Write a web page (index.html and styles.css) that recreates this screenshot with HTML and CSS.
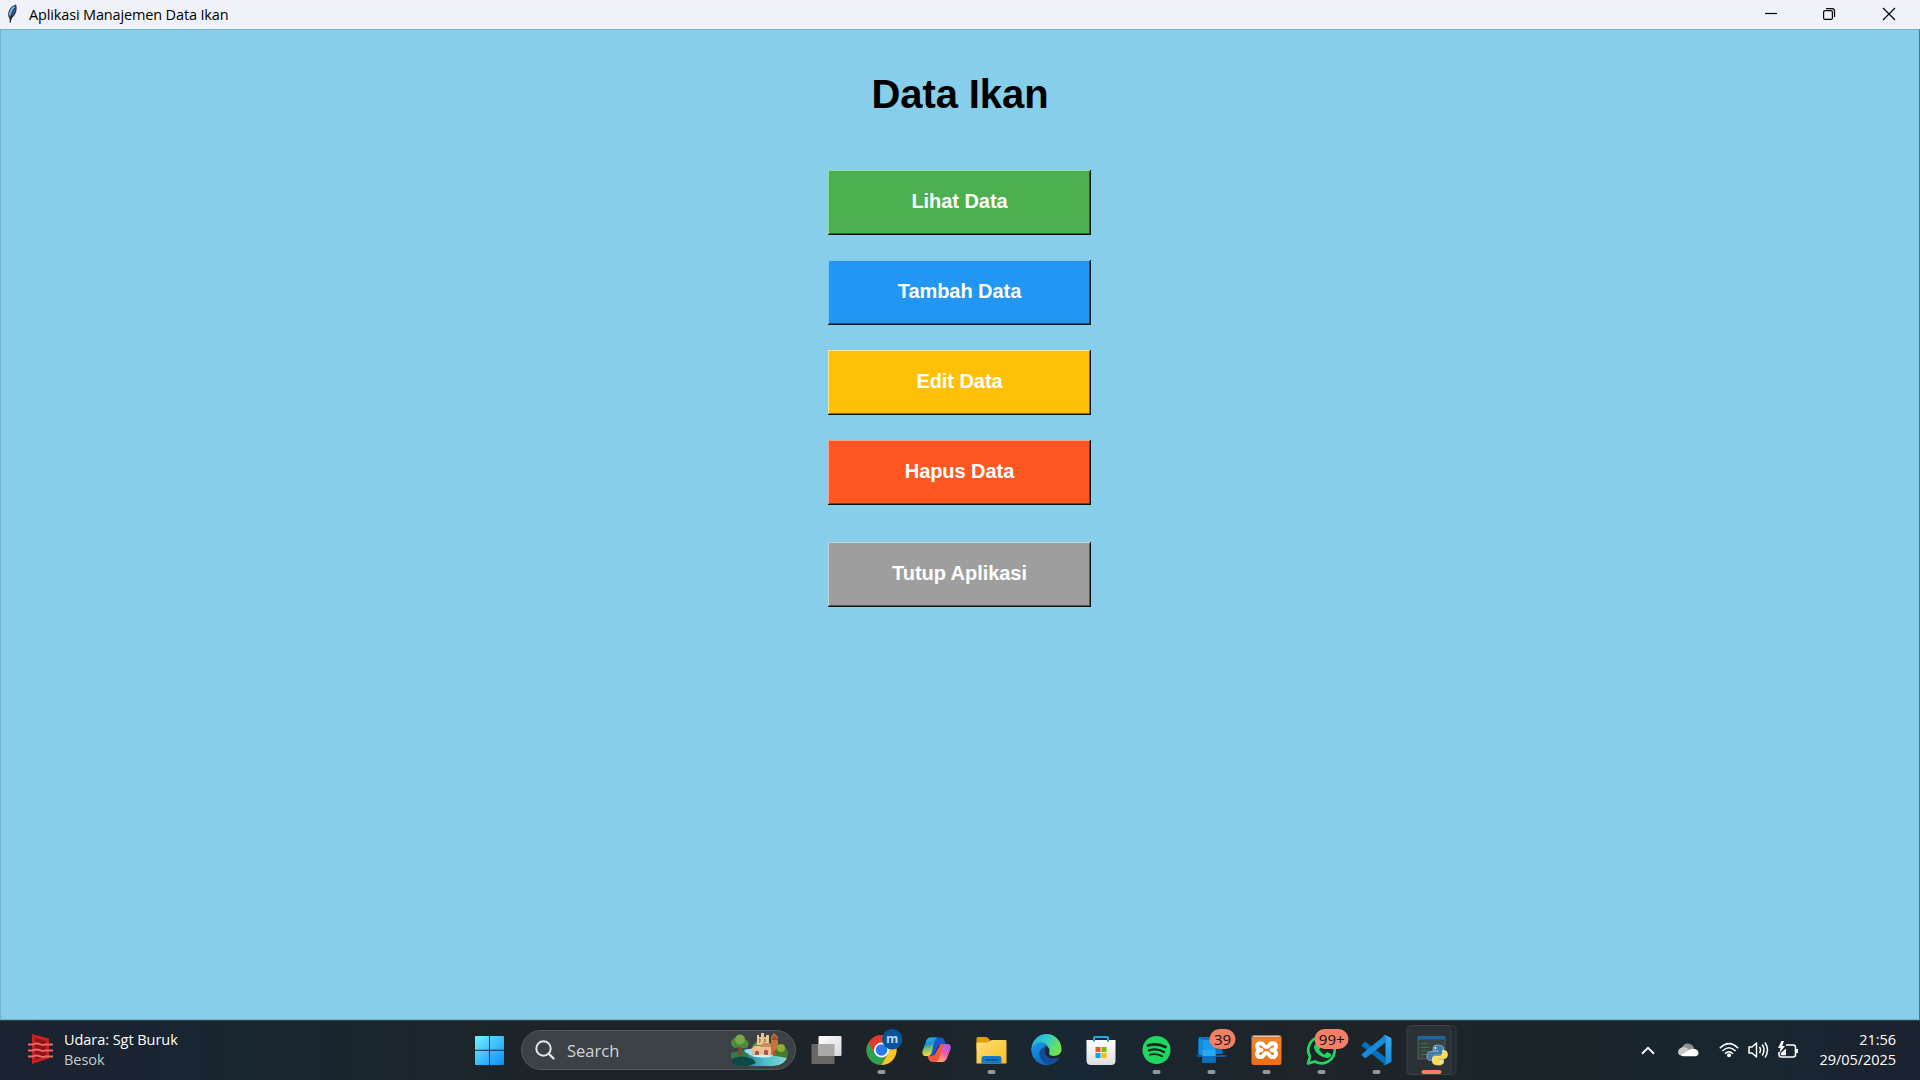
FILE: index.html
```
<!DOCTYPE html>
<html lang="id">
<head>
<meta charset="utf-8">
<title>Aplikasi Manajemen Data Ikan</title>
<link rel="stylesheet" href="styles.css">
</head>
<body>
<header class="titlebar">
  <svg class="feather" width="12" height="20" viewBox="0 0 12 20"><path d="M3.500 15C0 9 4 2 10 .5c1.500 4 .5 10-4 13.500L4 19l-.5-4Z" fill="#333b48"/><path d="M3.500 12C2 8 5 3.500 9 2c.8 3.500-.5 7.500-3.500 10.500Z" fill="#3d76b5"/><path d="M4 11c0-4 2-6.500 4.500-8.500" stroke="#8bb9e8" stroke-width="1.500" fill="none"/><path d="M4 19 6 10l3-6" stroke="#10151d" stroke-width=".7" fill="none"/></svg>
  <span class="title">Aplikasi Manajemen Data Ikan</span>
  <div class="controls">
    <svg width="58" height="29" viewBox="0 0 58 29"><path d="M23 13.500h12" stroke="#000" stroke-width="1.200"/></svg>
    <svg width="59" height="29" viewBox="0 0 59 29"><g fill="none" stroke="#000" stroke-width="1.200"><rect x="23.600" y="10.600" width="8.800" height="8.800" rx="1.500"/><path d="M26 8.600h6a2.500 2.500 0 0 1 2.500 2.500v6"/></g></svg>
    <svg width="61" height="29" viewBox="0 0 61 29"><path d="m24 8 12 12M36 8 24 20" stroke="#000" stroke-width="1.200"/></svg>
  </div>
</header>

<main class="window">
  <h1 class="heading">Data Ikan</h1>
  <div class="menu">
    <button class="btn green">Lihat Data</button>
    <button class="btn blue">Tambah Data</button>
    <button class="btn amber">Edit Data</button>
    <button class="btn red">Hapus Data</button>
    <button class="btn gray">Tutup Aplikasi</button>
  </div>
</main>

<footer class="taskbar">
  <div class="weather">
    <svg width="26" height="30" viewBox="0 0 26 30"><path d="m4 0 17 4.500v20L4 30Z" fill="#c8201f"/><path d="m7 4 11 3v15.500L7 26Z" fill="#8d1416"/><g fill="none" stroke="#e8686c" stroke-width="2"><path d="M0 10.500h5c5-3 9 2 12 0h8M0 16.500h5c5-3 9 2 12 0h8M0 22.500h5c5-3 9 2 12 0h8"/></g></svg>
    <div class="lines"><span class="udara">Udara: Sgt Buruk</span><span class="dim">Besok</span></div>
  </div>

  <div class="apps">
    <svg class="app start" viewBox="-27.5 -30 55 60"><defs><linearGradient id="win" gradientUnits="userSpaceOnUse" x1="-14" y1="-14" x2="14" y2="15"><stop stop-color="#72efff"/><stop offset="1" stop-color="#0c8efb"/></linearGradient></defs><path fill="url(#win)" d="M-13.500-14H-.5V-.3h-14V-13a1 1 0 0 1 1-1ZM.5-14h13a1 1 0 0 1 1 1V-.3H.5ZM-14.500.7H-.5v14.300h-13a1 1 0 0 1-1-1ZM.5.7h14V14a1 1 0 0 1-1 1H.5Z"/></svg>
    <div class="search">
      <svg width="20" height="20" viewBox="0 0 20 20" fill="none" stroke="#e3e5e6" stroke-width="2"><circle cx="8.500" cy="8.500" r="7.200"/><path d="m13.500 13.500 5 5" stroke-linecap="round" stroke-width="2.400"/></svg>
      <span class="search-label">Search</span>
      <svg class="scene" width="57" height="34" viewBox="0 0 57 34">
        <defs><clipPath id="sc"><path d="M0 0h57v22q-3 11-15 11H9Q2 32 0 27Z"/></clipPath><linearGradient id="water" x2="1"><stop stop-color="#0c5a78"/><stop offset=".6" stop-color="#48bcc8"/><stop offset="1" stop-color="#8ad9dc"/></linearGradient></defs>
        <g clip-path="url(#sc)">
          <path d="M0 20q14-5 30-2t26 6v10H0Z" fill="url(#water)"/>
          <path d="M13 17q10-3 18 1l-9 5q-6-1-9-6Z" fill="#9ddce8"/>
          <path d="M0 20q9-3 18 1l-2 5-16 3Z" fill="#347b45"/>
          <path d="M0 26q10-5 22 0l3 4-10 4H0Z" fill="#0d4a45"/>
          <path d="M7.500 12h3l1 10H7Z" fill="#74502f"/>
          <g fill="#4c8b3a"><circle cx="5" cy="10" r="5"/><circle cx="13" cy="11" r="4.500"/></g><circle cx="9" cy="6.500" r="5" fill="#7aa845"/>
          <path d="M21 14q5-8 10-6t10 7v7H22Z" fill="#5a9a3e"/>
          <path d="M26 2h2v2h2V0h3v4h2V2h3v10H26Z" fill="#e7c795"/>
          <path d="M28 6h1v3h-1m5-3h1v3h-1" stroke="#8c6037" fill="none"/>
          <path d="M20 16l4-3h20v10H23Z" fill="#f1bd98"/>
          <path d="M29 14l3-4h7l3 4Z" fill="#d08a55"/>
          <path d="M40 4l3-4 4 4v18h-7Z" fill="#c8723c"/><path d="m40 7 3.500-5 4 5Z" fill="#a34c29"/>
          <path d="M24 23v-4q2-3 4 0v4m5 0v-5q2-3 4 0v5m5 0v-5q2-2 3 0v5" fill="#a3583d"/>
          <path d="M44 18q5-8 11-3 4 6 1 10l-11-2Z" fill="#477a2a"/><circle cx="50" cy="15" r="4" fill="#8fae35"/>
          <path d="M20 23q10-3 22 0-8 3-22 0Z" fill="#d7eef0"/>
        </g>
      </svg>
    </div>

    <svg class="app taskview" viewBox="-27.5 -30 55 60"><defs><linearGradient id="tv" x2="1" y2="1"><stop stop-color="#fff"/><stop offset="1" stop-color="#d8d8d8"/></linearGradient></defs><rect x="-15" y="-6" width="23" height="20" rx="1" fill="#696766"/><rect x="-8" y="-14" width="23" height="20" rx="1" fill="url(#tv)"/><path d="M-8-6H8V6H-7a1 1 0 0 1-1-1Z" fill="#aaa9a8"/></svg>

    <svg class="app" viewBox="-27.5 -30 55 60"><circle r="15" fill="#e33b2e"/><path d="M-13-7.500A15 15 0 0 0 0 15L6.500 3.750H-6.500Z" fill="#2ba24c"/><path d="M0 15A15 15 0 0 0 13-7.500H0L6.500 3.750Z" fill="#fcc726"/><circle r="7.500" fill="#fff"/><circle r="5.800" fill="#2979ee"/><circle cx="10.700" cy="-10.700" r="10.200" fill="#04559b"/><text class="avatar" x="10.700" y="-7" text-anchor="middle">m</text><rect class="dot" x="-4" y="20" width="8" height="4" rx="2"/></svg>

    <svg class="app" viewBox="-27.5 -30 55 60"><defs><linearGradient id="c1" x2=".2" y2="1"><stop stop-color="#20b7ef"/><stop offset=".4" stop-color="#2192cf"/><stop offset=".7" stop-color="#8cc75b"/><stop offset="1" stop-color="#ffd52a"/></linearGradient><linearGradient id="c2" x1=".8" x2=".3" y2="1"><stop stop-color="#a45cf2"/><stop offset=".5" stop-color="#ea5ba5"/><stop offset="1" stop-color="#ffac78"/></linearGradient></defs><path d="M-6-12.500H4q3 0 4 3l1 4H5q-3 0-4 3L-3 6h-7Z" fill="#1458d6"/><path d="M6 12H-4q-3 0-4-3l-1-3h4q3 0 4-3L4-6h6Z" fill="#f2583e"/><path d="M-6-12.500H2q-3 0-4 4L-5 3q-1 3-4 3h-2q-4 0-3-5l3-8q1-5.500 5-5.500Z" fill="url(#c1)"/><path d="M6 12h-7q3 0 4-4L6-3q1-3 4-3h1q4 0 3 5l-3 8q-2 5-5 5Z" fill="url(#c2)"/></svg>

    <svg class="app" viewBox="-27.5 -30 55 60"><defs><linearGradient id="fo" x2="1" y2="1"><stop stop-color="#ffe07a"/><stop offset="1" stop-color="#fbbd1c"/></linearGradient></defs><path d="M-15-1v-10.500q0-1.500 1.500-1.500h8q1 0 2 1l2 2v9Z" fill="#e2a008"/><path d="M-15-7.500h11.500L0-10h14q1 0 1 1v22q0 .5-.5.500h-29q-.5 0-.5-.5Z" fill="url(#fo)"/><path d="M-10 13.500V8.500q0-2.500 2.500-2.500h15Q10 6 10 8.500v5Z" fill="#1279cc"/><path d="M-6 9.800H6.500" stroke="#07518e" stroke-width="1.400" stroke-linecap="round"/><rect class="dot" x="-4" y="20" width="8" height="4" rx="2"/></svg>

    <svg class="app" viewBox="-27.5 -30 55 60"><defs><linearGradient id="e1" x2="1" y2=".4"><stop stop-color="#25a8ed"/><stop offset=".5" stop-color="#31c8cc"/><stop offset="1" stop-color="#6fe450"/></linearGradient><linearGradient id="e2" x2=".6" y2="1"><stop stop-color="#1b9ee9"/><stop offset="1" stop-color="#0864c2"/></linearGradient></defs><path d="M-15-1A15 15 0 0 1 15-1C15.500 4 10 7 4.500 5.500 1 4.500 4 2 2.500-1.500-1-8-10-8-15 1Z" fill="url(#e1)"/><path d="M-15-1C-13-8-4-10 1-5-3-4-5 0-4 4-3 9 3 13 9 12A15 15 0 0 1-15-1Z" fill="url(#e2)"/><path d="M0-3.500C-6-3-9 3-6 8c2 4 6 7 10 6.500 4-.5 7-3.500 9.300-7C8 10 0 8-1.500 3-2 0-1-2 0-3.500Z" fill="#124e98"/></svg>

    <svg class="app" viewBox="-27.5 -30 55 60"><defs><linearGradient id="st" x2="0" y2="1"><stop stop-color="#fff"/><stop offset="1" stop-color="#dedede"/></linearGradient></defs><path d="M-7.500-8v-4q0-1 1-1h12q1 0 1 1v4" fill="none" stroke="#20a9e6" stroke-width="2"/><path d="M-15-10h29v20.500q0 4.500-4.500 4.500h-20q-4.500 0-4.500-4.500Z" fill="url(#st)"/><path d="M-7.500-10v1.500M6.500-10v1.500" stroke="#1689cc" stroke-width="2"/><path d="M-6-3h5v5h-5Z" fill="#f25022"/><path d="M0-3h5v5H0Z" fill="#7fba00"/><path d="M-6 3h5v5h-5Z" fill="#00a4ef"/><path d="M0 3h5v5H0Z" fill="#ffb900"/></svg>

    <svg class="app" viewBox="-27.5 -30 55 60"><circle r="14" fill="#1ed760"/><g fill="none" stroke="#102418" stroke-linecap="round"><path d="M-8.500-4.500Q1-7.500 9-3" stroke-width="2.800"/><path d="M-7.500 .3Q.5-2 7.500 2" stroke-width="2.300"/><path d="M-6.500 4.700Q0 3 5.800 6.300" stroke-width="1.900"/></g><rect class="dot" x="-4" y="20" width="8" height="4" rx="2"/></svg>

    <svg class="app" viewBox="-27.5 -30 55 60"><path d="M-13-13h24V4H-13Z" fill="#0973c4"/><path d="M-15 5h30v1.500L13 7h-26l-2-.5Z" fill="#0b5aa4"/><path d="M-13-11H-9V5h-4Z" fill="#1589dc"/><rect x="-9" y="-10" width="13" height="23" rx="1" fill="#189ae8"/><path d="M-9 0H4v6H-9Z" fill="#29a8f1"/><path d="M-9 6H4v7H-9Z" fill="#0870bd"/><rect x="-2" y="-21" width="26" height="20" rx="10" fill="#f47e66"/><text class="count" x="11" y="-5.500" text-anchor="middle">39</text><rect class="dot" x="-4" y="20" width="8" height="4" rx="2"/></svg>

    <svg class="app" viewBox="-27.5 -30 55 60"><defs><linearGradient id="xa" x2="0" y2="1"><stop stop-color="#cf7027"/><stop offset=".15" stop-color="#f0842f"/><stop offset="1" stop-color="#ed6d14"/></linearGradient></defs><rect x="-15" y="-15" width="30" height="30" rx="2.500" fill="url(#xa)"/><path d="M-13-13.500h26" stroke="#f7c6a0"/><path d="M-5-6.500C-11-8-11 0-5 0-11 0-11 8-5 7-2 6-3 3 0 3s2 3 5 4c6 1 6-7 0-7 6 0 6-8 0-6.500C2-5.500 3-3 0-3s-2-2.500-5-3.500Z" fill="none" stroke="#fff" stroke-width="4" stroke-linejoin="round"/><rect class="dot" x="-4" y="20" width="8" height="4" rx="2"/></svg>

    <svg class="app" viewBox="-27.5 -30 55 60"><path d="M-13.500 13.500-11.500 6.500A13.200 13.200 0 1 1-6.500 11.500Z" fill="none" stroke="#25d366" stroke-width="2.700" stroke-linejoin="round"/><path d="M-6-6q2-3 3.500 0L-1-3q0 1-1.500 2.500Q0 3.500 3 4.500L5 2.500q1-.8 5 2Q9 8 5.500 8-5 6-7.500-2-7.500-4-6-6Z" fill="#25d366"/><rect x="-7" y="-21" width="34" height="20" rx="10" fill="#f47e66"/><text class="count" x="10.200" y="-5.500" text-anchor="middle">99+</text><rect class="dot" x="-4" y="20" width="8" height="4" rx="2"/></svg>

    <svg class="app" viewBox="-27.5 -30 55 60"><defs><linearGradient id="vs" x2="0" y2="1"><stop stop-color="#35aaf2"/><stop offset="1" stop-color="#168fdd"/></linearGradient></defs><path d="m-14-6 2-1.800q.8-.6 1.600 0L9 7.500V14l-2-.5-21-17q-1.500-1.200 0-2.500Z" fill="#0071bd"/><path d="m-14 6 2 1.800q.8.6 1.600 0L9-7.500V-14l-2 .5-21 17q-1.500 1.200 0 2.500Z" fill="#168bdc"/><path d="M8.500-15 14-12.500q1 .5 1 1.500v22q0 1-1 1.500L8.500 15q-1.300 0-2-1.500Q9 15 9 12V-12Q9-15 6.500-13.500 7.200-15 8.500-15Z" fill="url(#vs)"/><rect class="dot" x="-4" y="20" width="8" height="4" rx="2"/></svg>

    <svg class="app" viewBox="-27.5 -30 55 60"><path d="M17-24.500h3.500q4 0 4 4v41q0 4-4 4H17" fill="#242b2f" stroke="#343b3f"/><rect x="-24.500" y="-24.500" width="44" height="49" rx="4" fill="#2b3236" stroke="#3a4145"/><path d="M-13.500-13.500h27V9h-27Z" fill="#394143" stroke="#5e686d" stroke-width=".8"/><path d="M-13.500-13.500h27v3h-27Z" fill="#1866a8"/><path d="M-10-6.500h6M-11-2.500h9M-10 1h7M-11 4.500h6" stroke="#347c3b"/><path d="M5.500-5q-4 0-4 3v2.500h5v1h-7q-4 0-4 4.500t3.500 4.500h2V8q0-3 3-3h5q3 0 3-3v-4q0-3-6.500-3Z" fill="#3d7cad" stroke="#b8d0df" stroke-width=".6"/><path d="M7 15q5 0 5-3V9.500H6.500v-1h6q3.500 0 3.500-4T12.500.5H11V3q0 3-3 3H4Q1 6 1 9v3q0 3 6 3Z" fill="#ffdc50" stroke="#fff0a8" stroke-width=".6"/><circle cx="4" cy="-2" r=".9" fill="#fff"/><circle cx="9" cy="12" r=".9" fill="#fff"/><rect x="-10" y="20" width="20" height="4" rx="2" fill="#f47e66"/></svg>
  </div>

  <div class="tray">
    <svg width="14" height="9" viewBox="0 0 14 9"><path d="m1 7.800 6-6 6 6" fill="none" stroke="#f5f5f5" stroke-width="2"/></svg>
    <svg class="cloud" width="21" height="14" viewBox="0 0 21 14"><path d="M4 5C5-1 14-1 16 5l-3 5H6Z" fill="#8c9093"/><path d="M4.500 13Q0 12.500 0 9q.5-4.500 6-5 3 0 5 2.500L16 13Z" fill="#c7c9ca"/><path d="m3 12 8.500-5.200Q14 5 17 6q3.500 1 3.500 4T17 13.300H5Q4 13 3 12Z" fill="#fff"/></svg>
    <svg class="wifi" width="20" height="16" viewBox="0 0 20 16" fill="none" stroke="#fff" stroke-width="1.600"><path d="M.8 6.200q9.200-9 18.400 0M3.400 9q6.600-6.500 13.200 0M6 11.700q4-4 8 0"/><circle cx="10" cy="13.300" r="2" fill="#fff" stroke="none"/></svg>
    <svg class="sound" width="21" height="18" viewBox="0 0 21 18" fill="none" stroke="#fff" stroke-width="1.500"><path d="M1 6h3l4.500-4v14L4 12H1Z" stroke-linejoin="round"/><path d="M11.500 6q2 3 0 6M14.200 3.500q3.600 5.500 0 11M17 1.500q5 7.500 0 15"/></svg>
    <svg class="battery" width="21" height="18" viewBox="0 0 21 18"><path d="M8 4h7q2.500 0 2.500 2.500v7Q17.500 16 15 16H3.500Q1 16 1 13.500V11" fill="none" stroke="#fff" stroke-width="1.600"/><path d="M18 8h2v4h-2Z" fill="#fff"/><path d="M2.800 14.300V12L8 7.500V14.300ZM3.500 0 0 7h2.500L1.500 12 7 5H4.200L6 0Z" fill="#fff"/></svg>
    <div class="clock"><span>21:56</span><span class="date">29/05/2025</span></div>
  </div>
</footer>
</body>
</html>
```
FILE: styles.css
```
* { box-sizing: border-box; }

body {
  margin: 0;
  width: 1920px;
  height: 1080px;
  display: flex;
  flex-direction: column;
  overflow: hidden;
  font-family: "Open Sans", "Noto Sans", sans-serif;
  font-stretch: 90%;
}

svg { display: block; flex: none; }

.titlebar {
  height: 29px;
  display: flex;
  align-items: center;
  padding-left: 6px;
  background: #eff3f9;
  color: #000;
}
.feather { margin-top: -2px; }
.title {
  margin-left: 11px;
  font-size: 14.5px;
  line-height: 20px;
  letter-spacing: -0.15px;
  white-space: nowrap;
}
.controls { display: flex; margin-left: auto; }

.window {
  flex: 1;
  display: flex;
  flex-direction: column;
  align-items: center;
  background: #87ceeb;
  border: 1px solid #74b1ca;
  border-right-color: #4d7686;
  font-family: "Liberation Sans", Arial, sans-serif;
}
.heading {
  margin: 41px 0 0;
  font-size: 40px;
  line-height: 46px;
  font-weight: bold;
  letter-spacing: -0.1px;
  color: #000;
}
.menu {
  display: flex;
  flex-direction: column;
  gap: 25px;
  margin-top: 53px;
  padding-right: 1px;
}
.btn {
  width: 263px;
  height: 65px;
  padding: 0 0 2px;
  border: 0;
  border-radius: 0;
  font: bold 20px "Liberation Sans", Arial, sans-serif;
  letter-spacing: -0.05px;
  color: #fff;
  background: var(--face);
  box-shadow: inset -1px -1px #0b0f10, inset 1px 1px var(--light), inset -2px -2px var(--shade);
}
.green { --face: #4caf50; --light: #8fe29c; --shade: #2a6030; }
.blue { --face: #2196f3; --light: #7cc8fb; --shade: #125285; }
.amber { --face: #ffc107; --light: #ffe889; --shade: #8a6803; }
.red { --face: #ff5722; --light: #f4a48c; --shade: #8c2f12; }
.gray { --face: #9e9e9e; --light: #cbd2d5; --shade: #565656; margin-top: 12px; }

.taskbar {
  height: 60px;
  display: grid;
  grid-template-columns: 461.5px 1fr auto;
  background: linear-gradient(90deg, #1b2230, #182630 13%, #1d2427 30%, #1c2429 48%, #182733 56%, #1e2427 68%, #1a2529 82%, #182630 92%, #1b2230);
  border-top: 1px solid #2f434c;
  color: #fff;
  font-size: 14.5px;
}
.weather {
  display: flex;
  align-items: flex-start;
  padding: 13px 0 0 28px;
  gap: 10px;
}
.lines, .clock {
  display: flex;
  flex-direction: column;
  line-height: 20px;
  letter-spacing: -0.05px;
  white-space: nowrap;
}
.lines { margin-top: -4px; }
.dim { color: #c6cacd; }

.apps { display: flex; margin-top: -1px; }
.app { width: 55px; height: 60px; }
.search {
  width: 275px;
  height: 40px;
  margin: 10px 2.500px 0 4.500px;
  border: 1px solid #54595c;
  border-radius: 20px;
  background: #3b4145;
  display: flex;
  align-items: center;
  padding-left: 13px;
}
.search-label { margin-left: 12px; font-size: 16.500px; color: #d3d5d6; }
.scene { margin: 0 7px 0 auto; }
.dot { fill: #95999c; }
.avatar { font: bold 12.500px "Open Sans", sans-serif; fill: #b9d5ea; }
.count { font: 15px "Open Sans", sans-serif; font-stretch: 90%; fill: #111; }

.tray { display: flex; align-items: center; padding: 0 24px 1px 0; }
.cloud { margin-left: 23px; }
.wifi { margin-left: 20px; }
.sound { margin-left: 9px; }
.battery { margin-left: 9px; }
.clock { width: 97.500px; align-items: flex-end; }
```
